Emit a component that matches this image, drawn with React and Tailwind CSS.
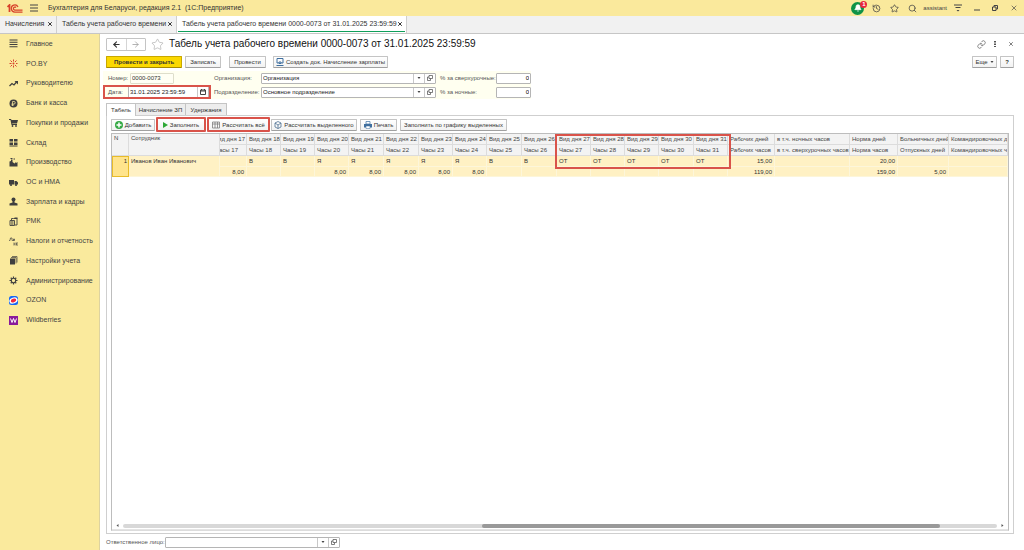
import { ArrowLeft, ArrowRight, Bell, History, Link, Search, Star, X } from 'lucide-react';

const tabs = [
  { title: 'Начисления', width: 'w-[57px]' },
  { title: 'Табель учета рабочего времени', width: 'w-[120px]' },
  { title: 'Табель учета рабочего времени 0000-0073 от 31.01.2025 23:59:59', width: 'w-[230px]', active: true },
];

const sections = [
  {
    title: 'Главное',
    icon: <path d="M1 2h16M1 6.500h16M1 11h16M1 15.500h16" stroke="currentColor" strokeWidth="2" />,
  },
  {
    title: 'PO.BY',
    icon: (
      <g stroke="#d8402f" strokeWidth="2">
        <path d="M9 1v4M9 13v4M1 9h4M14 9h3M3 3l3 3M12 12l3 3M15 3l-3 3M3 15l3-3" />
        <circle cx="9" cy="9" r="2" fill="#d8402f" stroke="none" />
      </g>
    ),
  },
  {
    title: 'Руководителю',
    icon: (
      <g>
        <path d="M1 14l5-5 4 3 5-6" fill="none" stroke="currentColor" strokeWidth="2.500" />
        <path d="M11 4h7v7z" fill="currentColor" />
      </g>
    ),
  },
  {
    title: 'Банк и касса',
    icon: (
      <g>
        <circle cx="9" cy="9" r="8" fill="currentColor" />
        <path d="M7 14V5h3a2.500 2.500 0 0 1 0 5H5M5 12h5" fill="none" stroke="#faea9d" strokeWidth="1.500" />
      </g>
    ),
  },
  {
    title: 'Покупки и продажи',
    icon: (
      <g fill="currentColor">
        <path d="M0 2h4l1 2h13l-2 7H6l1 1h9v2H5L3 4H0z" />
        <circle cx="7" cy="16" r="1.800" />
        <circle cx="14" cy="16" r="1.800" />
      </g>
    ),
  },
  {
    title: 'Склад',
    icon: <path d="M1 2h7v5H1zM10 2h7v5h-7zM1 9h7v5H1zM10 9h7v5h-7zM1 15h16v2H1z" fill="currentColor" />,
  },
  {
    title: 'Производство',
    icon: <path d="M1 17V7l3-1V3h3v5l4 3 3-3v2l3-2v9zM3 0h4v2H3zM9 1h3v2H9z" fill="currentColor" />,
  },
  {
    title: 'ОС и НМА',
    icon: (
      <g fill="currentColor">
        <path d="M0 4h10v9H0zM11 6h4l3 3v4h-7z" />
        <circle cx="4" cy="14" r="2.200" />
        <circle cx="14" cy="14" r="2.200" />
      </g>
    ),
  },
  {
    title: 'Зарплата и кадры',
    icon: (
      <g fill="currentColor">
        <circle cx="9" cy="5" r="4" />
        <path d="M7 8h4v3l6 2v4H1v-4l6-2z" />
      </g>
    ),
  },
  {
    title: 'РМК',
    icon: (
      <g>
        <path d="M2 7h9v10H2zM9 3h7v13h-4M5 7V3h4" fill="none" stroke="currentColor" strokeWidth="1.800" />
        <path d="M4 9h5v2H4zM4 13h5v2H4zM11 1h6v3h-6z" fill="currentColor" />
      </g>
    ),
  },
  {
    title: 'Налоги и отчетность',
    icon: (
      <g fill="none" stroke="currentColor" strokeWidth="1.400">
        <path d="M1 8V7h1l1-5h3v5h1v1M9 8V4h2v3H9M10 11v6M14 11l-3 3 3 3M18 12h-3v4h3" />
      </g>
    ),
  },
  {
    title: 'Настройки учета',
    icon: (
      <g>
        <path d="M2 5h10v12H2z" fill="currentColor" />
        <path d="M4 3h10v12M6 1h10v12" fill="none" stroke="currentColor" strokeWidth="1.400" />
      </g>
    ),
  },
  {
    title: 'Администрирование',
    icon: (
      <g fill="none" stroke="currentColor">
        <circle cx="9" cy="9" r="4.500" strokeWidth="2.400" />
        <path d="M9 1v3M9 14v3M1 9h3M14 9h3M3.500 3.500l2 2M12.500 12.500l2 2M14.500 3.500l-2 2M3.500 14.500l2-2" strokeWidth="2.400" />
      </g>
    ),
  },
  {
    title: 'OZON',
    icon: (
      <g>
        <rect width="18" height="18" rx="5" fill="#1466f5" />
        <ellipse cx="9" cy="9" rx="8.500" ry="6" fill="#fff" transform="rotate(-20 9 9)" />
        <ellipse cx="9" cy="9" rx="5.500" ry="3.500" fill="#f0253c" transform="rotate(-20 9 9)" />
      </g>
    ),
  },
  {
    title: 'Wildberries',
    icon: (
      <g>
        <rect width="18" height="18" fill="#8a1a9b" />
        <path d="M3 5l3 8 3-8 3 8 3-8" fill="none" stroke="#fff" strokeWidth="2" />
      </g>
    ),
  },
];

const days = [
  { day: 18, kind: 'В', hours: '', width: 'w-[34px]' },
  { day: 19, kind: 'В', hours: '', width: 'w-[34px]' },
  { day: 20, kind: 'Я', hours: '8,00', width: 'w-[34px]' },
  { day: 21, kind: 'Я', hours: '8,00', width: 'w-[35px]' },
  { day: 22, kind: 'Я', hours: '8,00', width: 'w-[35px]' },
  { day: 23, kind: 'Я', hours: '8,00', width: 'w-[34px]' },
  { day: 24, kind: 'Я', hours: '8,00', width: 'w-[34px]' },
  { day: 25, kind: 'В', hours: '', width: 'w-[35px]' },
  { day: 26, kind: 'В', hours: '', width: 'w-[35px]' },
  { day: 27, kind: 'ОТ', hours: '', width: 'w-[34px]' },
  { day: 28, kind: 'ОТ', hours: '', width: 'w-[34px]' },
  { day: 29, kind: 'ОТ', hours: '', width: 'w-[34px]' },
  { day: 30, kind: 'ОТ', hours: '', width: 'w-[35px]' },
  { day: 31, kind: 'ОТ', hours: '', width: 'w-[34px]' },
];

const totals = [
  { top: 'Рабочих дней', bottom: 'Рабочих часов', a: '15,00', b: '119,00', width: 'w-[47px]' },
  { top: 'в т.ч. ночных часов', bottom: 'в т.ч. сверхурочных часов', a: '', b: '', width: 'w-[75px]' },
  { top: 'Норма дней', bottom: 'Норма часов', a: '20,00', b: '159,00', width: 'w-[48px]' },
  { top: 'Больничных дней', bottom: 'Отпускных дней', a: '', b: '5,00', width: 'w-[51px]' },
  { top: 'Командировочных дней', bottom: 'Командировочных часов', a: '', b: '', width: '' },
];

const th = 'h-[11px] overflow-hidden border-r border-b border-[#dcdcdc] pl-0.5 text-left font-normal';
const td = 'overflow-hidden border-r border-b border-[#fdf6da] bg-[#fff1c4] px-0.5';

function Button({ className = 'h-3 border border-[#c4c4c4] border-b-[#a0a0a0]', width, children }) {
  return (
    <button
      type="button"
      className={`flex shrink-0 items-center justify-center gap-0.5 rounded-[1px] bg-linear-to-b from-white to-[#f2f2f2] whitespace-nowrap text-[#333] ${className} ${width}`}
    >
      {children}
    </button>
  );
}

function Caret() {
  return (
    <svg viewBox="0 0 6 4" className="h-[2px] w-[4px]" fill="#444">
      <path d="M0 0h6L3 4z" />
    </svg>
  );
}

function OpenIcon() {
  return (
    <svg viewBox="0 0 12 12" className="size-1.5" fill="none" stroke="#555" strokeWidth="1.500">
      <path d="M4 1h7v6H4zM4 4H1v7h6V7" />
    </svg>
  );
}

function RefField({ id, label, value }) {
  return (
    <>
      <label htmlFor={id} className="whitespace-nowrap text-[#555]">{label}</label>
      <div className="flex h-[11px] rounded-[1px] border border-[#b5b5b5] bg-white">
        <div className="relative flex min-w-0 flex-1">
          <select id={id} className="w-full appearance-none bg-transparent pl-px text-[#222] outline-none">
            <option>{value}</option>
          </select>
          <span className="pointer-events-none absolute inset-y-0 right-0 flex w-[11px] items-center justify-center border-l border-[#c8c8c8]">
            <Caret />
          </span>
        </div>
        <button type="button" aria-label="Открыть" className="flex w-[11px] items-center justify-center border-l border-[#c8c8c8]">
          <OpenIcon />
        </button>
      </div>
    </>
  );
}

function TitleBar() {
  return (
    <header className="flex h-4 shrink-0 items-center bg-[#fae99c] pr-1.5 pl-[7px] text-[#444]">
      <svg viewBox="0 0 32 18" className="h-[9px] w-4" fill="none" stroke="#d8432b" strokeWidth="2.500">
        <path d="M1 6l4-4v14" strokeWidth="3.500" />
        <path d="M22 6a7 7 0 1 0-6 10h15" />
        <path d="M18 7a3 3 0 1 0-2 5h15" />
      </svg>
      <button type="button" aria-label="Меню" className="ml-[7px]">
        <svg viewBox="0 0 16 16" className="size-2" stroke="currentColor" strokeWidth="2">
          <path d="M0 2h16M0 8h16M0 14h16" />
        </svg>
      </button>
      <h1 className="ml-2.5 flex-1 text-[7px] whitespace-pre text-[#333]">Бухгалтерия для Беларуси, редакция 2.1  (1С:Предприятие)</h1>
      <div className="flex items-center">
        <button type="button" aria-label="Уведомления" className="relative mr-2 flex size-[13px] items-center justify-center rounded-full bg-[#0f9347] text-white">
          <Bell className="size-2" fill="currentColor" />
          <span className="absolute -top-px -right-[3px] flex size-[7px] items-center justify-center rounded-full bg-[#e8283c] text-[6px] leading-none font-bold">1</span>
        </button>
        <button type="button" aria-label="История" className="mr-[9px]"><History className="size-[9px]" /></button>
        <button type="button" aria-label="Избранное" className="mr-[9px]"><Star className="size-[9px]" /></button>
        <button type="button" aria-label="Поиск" className="mr-1.5"><Search className="size-[9px]" /></button>
        <span className="mr-[7px] text-[6px]">assistant</span>
        <button type="button" aria-label="Сервис" className="mr-3">
          <svg viewBox="0 0 16 16" className="size-2" fill="currentColor">
            <path d="M0 1h16v2H0zM3 6h10v2H3zM5 12h6l-3 3z" />
          </svg>
        </button>
        <button type="button" aria-label="Свернуть" className="mr-3">
          <svg viewBox="0 0 12 12" className="size-1.5" stroke="currentColor" strokeWidth="2"><path d="M0 10h12" /></svg>
        </button>
        <button type="button" aria-label="Восстановить" className="mr-3">
          <svg viewBox="0 0 12 12" className="size-1.5" fill="none" stroke="currentColor" strokeWidth="2"><path d="M1 4h7v7H1zM4 4V1h7v7H8" /></svg>
        </button>
        <button type="button" aria-label="Закрыть"><X className="size-2" /></button>
      </div>
    </header>
  );
}

function WindowTabs() {
  return (
    <nav className="flex h-[18px] shrink-0 border-b border-[#c6c6c6] bg-[#f1f1f1] text-[7px] text-[#333]">
      {tabs.map((tab) => (
        <div key={tab.title} className={`flex border-r border-[#cfcfcf] ${tab.width} ${tab.active ? 'bg-white' : ''}`}>
          <div className={`mx-px flex h-4 flex-1 items-center justify-between border-b pr-0.5 pl-1 ${tab.active ? 'border-[#0f9f5a]' : 'border-transparent'}`}>
            <a href="#" className="whitespace-nowrap">{tab.title}</a>
            <button type="button" aria-label="Закрыть вкладку">
              <X className="size-1.5" strokeWidth={4} />
            </button>
          </div>
        </div>
      ))}
    </nav>
  );
}

function Sidebar() {
  return (
    <aside className="w-[100px] shrink-0 border-r border-[#ddd3a0] bg-[#faea9d]">
      <ul className="flex h-[296px] flex-col text-[7px] text-[#444]">
        {sections.map((section) => (
          <li key={section.title} className="flex flex-1 items-center">
            <a href="#" className="flex items-center gap-2 pl-[9px] whitespace-nowrap">
              <svg viewBox="0 0 18 18" className="size-[9px] shrink-0 text-[#3f3f3f]">{section.icon}</svg>
              {section.title}
            </a>
          </li>
        ))}
      </ul>
    </aside>
  );
}

function DocumentHeader() {
  return (
    <>
      <div className="flex h-5 items-center pr-1.5 pl-1.5">
        <div className="flex h-[13px] w-10 rounded-[1px] border border-[#c4c4c4]">
          <button type="button" aria-label="Назад" className="flex flex-1 items-center justify-center border-r border-[#d5d5d5]">
            <ArrowLeft className="size-[9px] text-[#333]" strokeWidth={3} />
          </button>
          <button type="button" aria-label="Вперед" className="flex flex-1 items-center justify-center">
            <ArrowRight className="size-[9px] text-[#999]" />
          </button>
        </div>
        <button type="button" aria-label="В избранное" className="ml-[5px]">
          <Star className="size-[13px] text-[#999]" strokeWidth={1} />
        </button>
        <h2 className="ml-[5px] flex-1 text-[10px] text-[#111]">Табель учета рабочего времени 0000-0073 от 31.01.2025 23:59:59</h2>
        <button type="button" aria-label="Ссылка" className="mr-2"><Link className="size-[9px] text-[#666]" /></button>
        <button type="button" aria-label="Еще действия" className="mr-3">
          <svg viewBox="0 0 4 12" className="h-1.5 w-0.5" fill="#555"><path d="M0 0h4v3H0zM0 5h4v3H0zM0 10h4v2H0z" /></svg>
        </button>
        <button type="button" aria-label="Закрыть" className="mr-1"><X className="size-1.5 text-[#555]" strokeWidth={3} /></button>
      </div>
      <div className="mt-0.5 flex items-center pr-2.5 pl-1.5">
        <Button
          className="h-3 border border-[#c9a800] border-b-[#a58a00] bg-[#fbd800] bg-none font-bold"
          width="w-[76px]"
        >
          Провести и закрыть
        </Button>
        <Button width="ml-[3px] w-9">Записать</Button>
        <Button width="ml-2 w-[37px]">Провести</Button>
        <Button width="ml-[7px] w-[115px]">
          <svg viewBox="0 0 16 16" className="size-2 shrink-0" fill="none" stroke="#3f6f9f" strokeWidth="2">
            <path d="M2 1h12v9H2z" />
            <path d="M1 15h14M8 6v6M5 9l3 3 3-3" />
          </svg>
          Создать док. Начисление зарплаты
        </Button>
        <div className="flex-1" />
        <Button width="w-[25px]">Еще <Caret /></Button>
        <Button width="ml-[3px] w-3.5"><b>?</b></Button>
      </div>
    </>
  );
}

function DocumentFields() {
  return (
    <div className="mt-[3px] ml-[3px] flex w-[428px] flex-col">
      <div className="flex h-[14px] items-center bg-[#fffff0]">
        <div className="flex w-[108px] items-center pl-[5px]">
          <label htmlFor="number" className="w-[22px] text-[#555]">Номер:</label>
          <input id="number" defaultValue="0000-0073" className="h-[11px] w-11 rounded-[1px] border border-[#dedecb] bg-[#fffff4] pl-px text-[#333]" />
        </div>
        <div className="ml-[3px] grid flex-1 grid-cols-[47px_175px] items-center">
          <RefField id="org" label="Организация:" value="Организация" />
        </div>
        <label htmlFor="overtime" className="w-14 whitespace-nowrap text-[#555]">% за сверхурочные:</label>
        <input id="overtime" defaultValue="0" className="h-[11px] w-[35px] rounded-[1px] border border-[#b5b5b5] bg-white pr-px text-right" />
      </div>
      <div className="flex h-[14px] items-center bg-[#fffff0]">
        <div className="flex h-[14px] w-[108px] items-center border-2 border-[#d9534a] pl-[3px]">
          <label htmlFor="date" className="w-[22px] text-[#555]">Дата:</label>
          <div className="flex h-2.5 flex-1 items-center border-x border-[#b5b5b5] bg-white">
            <input id="date" defaultValue="31.01.2025 23:59:59" className="w-[68px] min-w-0 pl-px text-[#222]" />
            <button type="button" aria-label="Календарь" className="flex h-full w-[11px] shrink-0 items-center justify-center border-l border-[#c8c8c8]">
              <svg viewBox="0 0 12 12" className="size-1.5" fill="none" stroke="#444" strokeWidth="2">
                <path d="M1 2h10v9H1zM1 4h10M3 0v3M9 0v3" />
              </svg>
            </button>
          </div>
        </div>
        <div className="ml-[3px] grid flex-1 grid-cols-[47px_175px] items-center">
          <RefField id="dept" label="Подразделение:" value="Основное подразделение" />
        </div>
        <label htmlFor="night" className="w-14 whitespace-nowrap text-[#555]">% за ночные:</label>
        <input id="night" defaultValue="0" className="h-[11px] w-[35px] rounded-[1px] border border-[#b5b5b5] bg-white pr-px text-right" />
      </div>
    </div>
  );
}

function Toolbar() {
  return (
    <div className="flex h-[17px] shrink-0 items-center pl-1">
      <Button width="w-11">
        <svg viewBox="0 0 16 16" className="size-2 shrink-0">
          <circle cx="8" cy="8" r="8" fill="#35a945" />
          <path d="M8 3v10M3 8h10" stroke="#fff" strokeWidth="3" />
        </svg>
        Добавить
      </Button>
      <Button className="h-[15px] border-2 border-[#d9534a]" width="ml-px w-[50px]">
        <svg viewBox="0 0 10 12" className="h-1.5 w-[5px] shrink-0" fill="#2ea836"><path d="M0 0l10 6-10 6z" /></svg>
        Заполнить
      </Button>
      <Button className="h-[15px] border-2 border-[#d9534a]" width="ml-px w-[63px]">
        <svg viewBox="0 0 16 16" className="size-2 shrink-0" fill="none" stroke="#777" strokeWidth="1.500">
          <path d="M1 2h14v12H1zM1 6h14M6 2v12M11 2v12" />
        </svg>
        Рассчитать всё
      </Button>
      <Button width="ml-px w-[86px]">
        <svg viewBox="0 0 16 16" className="size-2 shrink-0" fill="none" stroke="#44688c" strokeWidth="1.500">
          <path d="M8 1l6 3v8l-6 3-6-3V4zM2 4l6 4 6-4M8 8v7" />
        </svg>
        Рассчитать выделенного
      </Button>
      <Button width="ml-[3px] w-[37px]">
        <svg viewBox="0 0 16 16" className="size-2 shrink-0">
          <path d="M4 1h8v5H4z" fill="#fff" stroke="#4a79a8" strokeWidth="1.500" />
          <path d="M0 6h16v7H0z" fill="#3f6f9f" />
          <path d="M4 10h8v5H4z" fill="#fff" stroke="#3f6f9f" />
        </svg>
        Печать
      </Button>
      <Button width="ml-[3px] w-[107px]">Заполнить по графику выделенных</Button>
    </div>
  );
}

function Timesheet() {
  return (
    <div className="relative mr-1 mb-0.5 ml-1 flex flex-1 flex-col overflow-hidden border border-[#bdbdbd] border-b-[#dcdcdc] bg-white">
      <table className="w-full table-fixed border-separate border-spacing-0 whitespace-nowrap text-[#444]">
        <colgroup>
          <col className="w-[17px]" />
          <col className="w-[91px]" />
          <col className="w-[27px]" />
          {days.map((d) => <col key={d.day} className={d.width} />)}
          {totals.map((t) => <col key={t.top} className={t.width} />)}
        </colgroup>
        <thead className="bg-[#f3f3f3]">
          <tr>
            <th rowSpan={2} className={`${th} align-top`}>N</th>
            <th rowSpan={2} className={`${th} align-top`}>Сотрудник</th>
            <th className={th}><div className="-ml-0.5 flex justify-end overflow-hidden pr-px">Вид дня 17</div></th>
            {days.map((d) => <th key={d.day} className={th}>Вид дня {d.day}</th>)}
            {totals.map((t) => <th key={t.top} className={th}>{t.top}</th>)}
          </tr>
          <tr>
            <th className={th}><div className="-ml-0.5 flex justify-end overflow-hidden pr-2">Часы 17</div></th>
            {days.map((d) => <th key={d.day} className={th}>Часы {d.day}</th>)}
            {totals.map((t) => <th key={t.bottom} className={th}>{t.bottom}</th>)}
          </tr>
        </thead>
        <tbody className="text-[#333]">
          <tr className="h-[11px]">
            <td rowSpan={2} className="border border-[#e8bc2a] bg-[#ffe48c] px-px text-right align-top">1</td>
            <td rowSpan={2} className={`${td} pt-px align-top`}>Иванов Иван Иванович</td>
            <td className={td} />
            {days.map((d) => <td key={d.day} className={td}>{d.kind}</td>)}
            {totals.map((t) => <td key={t.top} className={`${td} text-right`}>{t.a}</td>)}
          </tr>
          <tr className="h-[10px]">
            <td className={`${td} text-right`}>8,00</td>
            {days.map((d) => <td key={d.day} className={`${td} text-right`}>{d.hours}</td>)}
            {totals.map((t) => <td key={t.top} className={`${td} text-right`}>{t.b}</td>)}
          </tr>
        </tbody>
      </table>
      {/* vacation days highlight */}
      <div className="pointer-events-none absolute top-0 left-[443px] h-[35px] w-[176px] border-2 border-[#d9534a]" />
      <div className="mt-auto flex h-2 items-center gap-1 border-b border-[#e4e4e4] px-1">
        <svg viewBox="0 0 4 6" className="h-[3px] w-[3px]" fill="#555"><path d="M4 0v6L0 3z" /></svg>
        <div className="flex h-1 flex-1 justify-end rounded-full bg-[#d8d8d8] pr-[57px]">
          <div className="h-1 w-[458px] rounded-full bg-[#999]" />
        </div>
        <svg viewBox="0 0 4 6" className="h-[3px] w-[3px]" fill="#555"><path d="M0 0v6l4-3z" /></svg>
      </div>
    </div>
  );
}

export default function App() {
  return (
    <div className="flex h-screen flex-col overflow-hidden bg-white font-['Liberation_Sans',Arial,sans-serif] text-[6px] leading-[8px]">
      <TitleBar />
      <WindowTabs />
      <div className="flex min-h-0 flex-1">
        <Sidebar />
        <main className="flex min-w-0 flex-1 flex-col">
          <DocumentHeader />
          <DocumentFields />
          <div role="tablist" className="mt-1 ml-1.5 flex h-3 shrink-0 whitespace-nowrap text-[#333]">
            <button type="button" role="tab" aria-selected="true" className="relative z-10 -mb-px w-[30px] border border-b-0 border-[#c4c4c4] bg-white">Табель</button>
            <button type="button" role="tab" className="w-[50px] border border-b-0 border-l-0 border-[#c4c4c4] bg-[#ededed]">Начисление ЗП</button>
            <button type="button" role="tab" className="w-[41px] border border-b-0 border-l-0 border-[#c4c4c4] bg-[#ededed]">Удержания</button>
          </div>
          <section className="mr-2.5 ml-1.5 flex min-h-0 flex-1 flex-col border border-[#cfcfcf]">
            <Toolbar />
            <Timesheet />
          </section>
          <footer className="flex h-4 shrink-0 items-center pl-1.5">
            <div className="grid grid-cols-[59px_175px] items-center">
              <RefField id="person" label="Ответственное лицо:" value="" />
            </div>
          </footer>
        </main>
      </div>
    </div>
  );
}
